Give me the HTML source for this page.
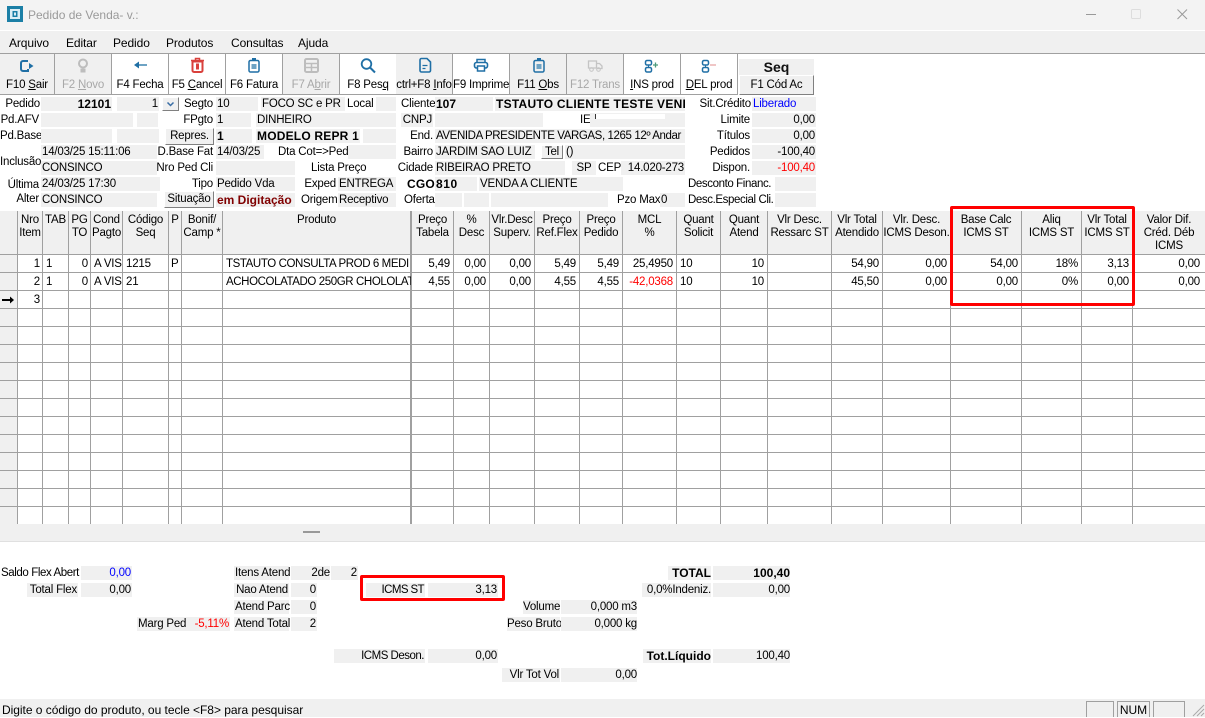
<!DOCTYPE html>
<html><head><meta charset="utf-8"><title>Pedido de Venda</title>
<style>
html,body{margin:0;padding:0;background:#fff}
body{position:relative;width:1205px;height:717px;overflow:hidden;font:11.5px/14px "Liberation Sans",sans-serif;letter-spacing:-.2px;color:#000}
div{position:absolute;white-space:nowrap;box-sizing:border-box}
.l{height:14px}
.g{height:14px;background:#f0f0f0;padding:0 1px}
.r{text-align:right}
.b{font-weight:bold;font-size:12px;letter-spacing:0}
.btn{height:17px;background:#f0f0f0;border:1px solid;border-color:#fff #808080 #808080 #fff;text-align:center;line-height:15px}
.tb{top:54px;height:40px;width:57px;text-align:center;padding-top:24px;border-right:1px solid #a0a0a0}
.w{background:#fff}.d{background:#f0f0f0}
.dis{color:#a8a8a8}
.h{top:214px;line-height:13px;text-align:center;overflow:hidden;height:40px}
.c{height:14px;line-height:14px}
.m{top:36px;font-size:12px;letter-spacing:-.1px}
svg{position:absolute;left:0;top:0}
</style></head><body>

<div style="left:0;top:0;width:1205px;height:30px;background:#f3f3f3"></div>
<div style="left:0;top:31px;width:1205px;height:22px;background:#f0f0f0"></div>
<div style="left:0;top:53px;width:1205px;height:1px;background:#a0a0a0"></div>
<div style="left:28px;top:8px;font-size:12px;letter-spacing:0;color:#9a9a9a">Pedido de Venda- v.:</div>
<div class="m" style="left:9px">Arquivo</div>
<div class="m" style="left:66px">Editar</div>
<div class="m" style="left:113px">Pedido</div>
<div class="m" style="left:166px">Produtos</div>
<div class="m" style="left:231px">Consultas</div>
<div class="m" style="left:298px">Ajuda</div>

<div class="tb d" style="left:0;width:55px">F10 <u>S</u>air</div>
<div class="tb d dis" style="left:55px">F2 <u>N</u>ovo</div>
<div class="tb w" style="left:112px">F4 Fecha</div>
<div class="tb w" style="left:169px">F5 <u>C</u>ancel</div>
<div class="tb w" style="left:226px">F6 Fatura</div>
<div class="tb d dis" style="left:283px">F7 A<u>b</u>rir</div>
<div class="tb w" style="left:340px">F8 Pes<u>q</u></div>
<div class="tb d" style="left:396px;width:57px">ctrl+F8 <u>I</u>nfo</div>
<div class="tb w" style="left:453px">F9 Imprime</div>
<div class="tb d" style="left:510px">F11 <u>O</u>bs</div>
<div class="tb d dis" style="left:567px">F12 Trans</div>
<div class="tb w" style="left:624px"><u>I</u>NS prod</div>
<div class="tb w" style="left:681px"><u>D</u>EL prod</div>
<div style="left:0;top:94px;width:738px;height:1px;background:#a0a0a0"></div>
<div class="b" style="left:739px;top:59px;width:75px;height:16px;background:#f0f0f0;text-align:center;font-size:14px;line-height:17px;color:#111">Seq</div>
<div class="btn" style="left:739px;top:75px;width:75px;height:20px;line-height:18px">F1 Cód Ac</div>

<!-- Row 1 -->
<div class="l r" style="left:0;top:97px;width:40px">Pedido</div>
<div class="g r b" style="left:41px;top:97px;width:71px">12101</div>
<div class="g r" style="left:117px;top:97px;width:42px">1</div>
<div class="btn" style="left:162px;top:97px;width:17px;height:14px"></div>
<div class="l r" style="left:170px;top:97px;width:43px">Segto</div>
<div class="g" style="left:216px;top:97px;width:42px">10</div>
<div class="g" style="left:261px;top:97px;width:84px">FOCO SC e PR</div>
<div class="l" style="left:347px;top:97px">Local</div>
<div class="g" style="left:376px;top:97px;width:20px"></div>
<div class="l" style="left:401px;top:97px">Cliente</div>
<div class="g b" style="left:435px;top:97px;width:58px">107</div>
<div class="g b" style="left:495px;top:97px;width:190px;overflow:hidden;letter-spacing:.25px">TSTAUTO CLIENTE TESTE VENI</div>
<div class="l r" style="left:690px;top:97px;width:61px">Sit.Crédito</div>
<div class="g" style="left:752px;top:97px;width:64px;color:#00f">Liberado</div>

<!-- Row 2 -->
<div class="l r" style="left:0;top:113px;width:39px">Pd.AFV</div>
<div class="g" style="left:41px;top:113px;width:92px"></div>
<div class="g" style="left:137px;top:113px;width:21px"></div>
<div class="l r" style="left:170px;top:113px;width:43px">FPgto</div>
<div class="g" style="left:216px;top:113px;width:35px">1</div>
<div class="g" style="left:256px;top:113px;width:140px">DINHEIRO</div>
<div class="g r" style="left:401px;top:113px;width:32px">CNPJ</div>
<div class="g" style="left:435px;top:113px;width:108px"></div>
<div class="l" style="left:580px;top:113px">IE</div>
<div class="g" style="left:590px;top:113px;width:95px"></div>
<div style="left:595px;top:114px;width:70px;height:5px;background:#fff;border-left:1px solid #333"></div>
<div class="l r" style="left:690px;top:113px;width:60px">Limite</div>
<div class="g r" style="left:752px;top:113px;width:64px">0,00</div>

<!-- Row 3 -->
<div class="l r" style="left:0;top:129px;width:39px">Pd.Base</div>
<div class="g" style="left:41px;top:129px;width:71px"></div>
<div class="g" style="left:117px;top:129px;width:42px"></div>
<div class="btn" style="left:165px;top:128px;width:49px">Repres.</div>
<div class="g b" style="left:216px;top:129px;width:36px">1</div>
<div class="g b" style="left:256px;top:129px;width:104px;letter-spacing:.2px">MODELO REPR 1</div>
<div class="g" style="left:363px;top:129px;width:33px"></div>
<div class="l r" style="left:400px;top:129px;width:33px">End.</div>
<div class="g" style="left:435px;top:129px;width:250px;overflow:hidden;letter-spacing:-.4px">AVENIDA PRESIDENTE VARGAS, 1265 12º Andar</div>
<div class="l r" style="left:690px;top:129px;width:60px">Títulos</div>
<div class="g r" style="left:752px;top:129px;width:64px">0,00</div>

<!-- Row 4 -->
<div class="g" style="left:41px;top:145px;width:116px">14/03/25 15:11:06</div>
<div class="l r" style="left:155px;top:145px;width:58px">D.Base Fat</div>
<div class="g" style="left:216px;top:145px;width:48px">14/03/25</div>
<div class="l" style="left:278px;top:145px">Dta Cot=&gt;Ped</div>
<div class="g" style="left:348px;top:145px;width:48px"></div>
<div class="l r" style="left:400px;top:145px;width:33px">Bairro</div>
<div class="g" style="left:435px;top:145px;width:100px">JARDIM SAO LUIZ</div>
<div class="btn" style="left:541px;top:145px;width:22px;height:14px;line-height:13px">Tel</div>
<div class="g" style="left:565px;top:145px;width:120px">()</div>
<div class="l r" style="left:690px;top:145px;width:60px">Pedidos</div>
<div class="g r" style="left:752px;top:145px;width:64px">-100,40</div>

<!-- Row 5 -->
<div class="l r" style="left:0;top:155px;width:39px">Inclusão</div>
<div class="g" style="left:41px;top:161px;width:116px">CONSINCO</div>
<div class="l r" style="left:155px;top:161px;width:58px">Nro Ped Cli</div>
<div class="g" style="left:216px;top:161px;width:79px"></div>
<div class="l" style="left:311px;top:161px">Lista Preço</div>
<div class="l r" style="left:395px;top:161px;width:38px">Cidade</div>
<div class="g" style="left:435px;top:161px;width:130px">RIBEIRAO PRETO</div>
<div class="g" style="left:572px;top:161px;width:24px;text-align:center">SP</div>
<div class="l" style="left:598px;top:161px">CEP</div>
<div class="g r" style="left:621px;top:161px;width:64px">14.020-273</div>
<div class="l r" style="left:690px;top:161px;width:60px">Dispon.</div>
<div class="g r" style="left:752px;top:161px;width:64px;color:#f00">-100,40</div>

<!-- Row 6 -->
<div class="l r" style="left:0;top:178px;width:39px">Última</div>
<div class="g" style="left:41px;top:177px;width:119px">24/03/25 17:30</div>
<div class="l r" style="left:170px;top:177px;width:43px">Tipo</div>
<div class="g" style="left:216px;top:177px;width:79px">Pedido Vda</div>
<div class="l r" style="left:300px;top:177px;width:36px">Exped</div>
<div class="g" style="left:338px;top:177px;width:58px">ENTREGA</div>
<div class="l b" style="left:407px;top:177px;letter-spacing:.2px">CGO</div>
<div class="g b" style="left:435px;top:177px;width:42px;letter-spacing:.6px">810</div>
<div class="g" style="left:479px;top:177px;width:144px">VENDA A CLIENTE</div>
<div class="l" style="left:688px;top:177px;letter-spacing:-.4px">Desconto Financ.</div>
<div class="g" style="left:775px;top:177px;width:41px"></div>

<!-- Row 7 -->
<div class="l r" style="left:0;top:192px;width:39px">Alter</div>
<div class="g" style="left:41px;top:193px;width:116px">CONSINCO</div>
<div class="btn" style="left:164px;top:191px;width:50px">Situação</div>
<div class="g b" style="left:216px;top:193px;width:79px;color:#800000;overflow:hidden">em Digitação</div>
<div class="l" style="left:301px;top:193px">Origem</div>
<div class="g" style="left:338px;top:193px;width:58px">Receptivo</div>
<div class="l" style="left:404px;top:193px">Oferta</div>
<div class="g" style="left:435px;top:193px;width:27px"></div>
<div class="g" style="left:464px;top:193px;width:25px"></div>
<div class="g" style="left:491px;top:193px;width:117px"></div>
<div class="l" style="left:617px;top:193px">Pzo Max</div>
<div class="g" style="left:660px;top:193px;width:25px">0</div>
<div class="l" style="left:688px;top:193px;letter-spacing:-.4px">Desc.Especial Cli.</div>
<div class="g" style="left:775px;top:193px;width:41px"></div>

<!-- Grid backgrounds -->
<div style="left:0;top:211px;width:1205px;height:43px;background:#f0f0f0"></div>
<div style="left:0;top:254px;width:17px;height:270px;background:#f0f0f0"></div>
<div style="left:0;top:524px;width:1205px;height:17px;background:#f0f0f0"></div>
<div style="left:0;top:541px;width:1205px;height:1px;background:#e0e0e0"></div>
<div style="left:303px;top:531px;width:17px;height:2px;background:#999"></div>
<div style="left:0;top:699px;width:1205px;height:18px;background:#f0f0f0"></div>

<svg width="1205" height="717" viewBox="0 0 1205 717" fill="none" shape-rendering="crispEdges">
<g stroke="#a0a0a0" stroke-width="1">
<path d="M17.5 211V524M42.5 211V524M68.5 211V524M90.5 211V524M122.5 211V524M168.5 211V524M181.5 211V524M222.5 211V524M453.5 211V524M489.5 211V524M534.5 211V524M579.5 211V524M622.5 211V524M676.5 211V524M720.5 211V524M767.5 211V524M831.5 211V524M882.5 211V524M950.5 211V524M1021.5 211V524M1081.5 211V524M1132.5 211V524"/>
<path d="M411 211V524" stroke-width="2"/>
<path d="M0 254.5H1205M0 272.5H1205M0 290.5H1205M0 308.5H1205M0 326.5H1205M0 344.5H1205M0 362.5H1205M0 380.5H1205M0 398.5H1205M0 416.5H1205M0 434.5H1205M0 452.5H1205M0 470.5H1205M0 488.5H1205M0 506.5H1205"/>
</g>
</svg>

<!-- Icons -->
<svg width="1205" height="717" viewBox="0 0 1205 717" fill="none">
<!-- app icon -->
<rect x="7" y="6" width="16" height="16" fill="#1b7fa6"/><rect x="10" y="9" width="10" height="10" fill="#dceef5"/><rect x="12.5" y="11" width="5" height="6" fill="#1b7fa6"/><rect x="14" y="12.5" width="2" height="3" fill="#dceef5"/>
<!-- window controls -->
<path d="M1086 14.5H1096" stroke="#999"/>
<rect x="1131.5" y="9.5" width="9" height="9" rx="1" stroke="#ddd"/>
<path d="M1177.5 9.5L1187 19M1187 9.5L1177.5 19" stroke="#999"/>
<!-- dropdown -->
<path d="M167.500 102.500l3 3 3-3" stroke="#3a6ea5" stroke-width="1.500"/>
<!-- exit -->
<path d="M28 61H23a2 2 0 0 0-2 2v6a2 2 0 0 0 2 2h5V69" stroke="#1f6fa5" stroke-width="2"/><path d="M29 63l4.500 3-4.500 3z" fill="#1f6fa5"/>
<!-- bulb -->
<circle cx="83" cy="63.500" r="4" stroke="#bdbdbd" stroke-width="2"/><path d="M80.500 68.500h5v4h-5z" fill="#bdbdbd"/>
<!-- back arrow -->
<path d="M137 65H147" stroke="#6ea3c4" stroke-width="2"/><path d="M134 65l5-3.500v7z" fill="#1f6fa5"/>
<!-- trash -->
<path d="M191 60.500H204M195.500 60V58.500h4V60" stroke="#d9403c" stroke-width="1.500"/><path d="M192.500 61.500h10V70.500a1.500 1.500 0 0 1-1.500 1.500h-7a1.500 1.500 0 0 1-1.500-1.500z" stroke="#d9403c" stroke-width="2"/><path d="M196 63.500h3v6h-3z" fill="#d9403c"/>
<!-- clipboard F6 -->
<rect x="249" y="60.500" width="10" height="11.500" rx="1.500" stroke="#1f6fa5" stroke-width="1.500"/><rect x="252" y="58" width="4" height="3" fill="#1f6fa5"/><path d="M251.500 64h5v5h-5z" fill="#6ea3c4"/>
<!-- table F7 -->
<rect x="305" y="59" width="13" height="13" rx="1.500" stroke="#bdbdbd" stroke-width="2"/><path d="M305 63.500H318M305 67.500H318M311.500 63.500V72" stroke="#bdbdbd" stroke-width="1.500"/>
<!-- search -->
<circle cx="366.500" cy="64" r="4.800" stroke="#1f6fa5" stroke-width="1.800"/><path d="M370 67.500L375 72.500" stroke="#1f6fa5" stroke-width="2"/>
<!-- doc -->
<path d="M420 60a1.500 1.500 0 0 1 1.500-1.500H427l3.500 3.500V70.500a1.500 1.500 0 0 1-1.500 1.500h-7.500a1.500 1.500 0 0 1-1.500-1.500z" stroke="#1f6fa5" stroke-width="1.600"/><path d="M422.500 65.500h5M422.500 68.500h3" stroke="#1f6fa5" stroke-width="1.200"/>
<!-- printer -->
<path d="M477 62.500V59.500h8V62.500" stroke="#1f6fa5" stroke-width="1.500"/><rect x="474.500" y="62.500" width="13" height="5.500" rx="2" stroke="#1f6fa5" stroke-width="1.600"/><rect x="477.500" y="66" width="7" height="5" fill="#fff" stroke="#1f6fa5" stroke-width="1.500"/>
<!-- clipboard F11 -->
<rect x="534" y="60.500" width="10" height="11.500" rx="1.500" stroke="#1f6fa5" stroke-width="1.500"/><rect x="537" y="58" width="4" height="3" fill="#1f6fa5"/><path d="M536.500 64h5v5h-5z" fill="#6ea3c4"/>
<!-- truck -->
<path d="M588.500 61h8v7h-8zM596.500 63.500h3l2.500 2.500v2.500h-5.500" stroke="#c4c4c4" stroke-width="1.300"/><circle cx="591.500" cy="69.500" r="1.800" stroke="#c4c4c4"/><circle cx="598.500" cy="69.500" r="1.800" stroke="#c4c4c4"/>
<!-- INS -->
<rect x="645.500" y="60.500" width="6" height="4.500" rx="1.500" stroke="#1f6fa5" stroke-width="1.500"/><rect x="645.500" y="67.500" width="6" height="4.500" rx="1.500" stroke="#1f6fa5" stroke-width="1.500"/><path d="M648.500 65V67.500" stroke="#1f6fa5"/><path d="M653 65h5M655.500 62.500v5" stroke="#4a9a7a" stroke-width="1.300"/>
<!-- DEL -->
<rect x="702.500" y="60.500" width="6" height="4.500" rx="1.500" stroke="#1f6fa5" stroke-width="1.500"/><rect x="702.500" y="67.500" width="6" height="4.500" rx="1.500" stroke="#1f6fa5" stroke-width="1.500"/><path d="M705.500 65V67.500" stroke="#1f6fa5"/><path d="M710 65h6" stroke="#e8a8a8" stroke-width="1.300"/>
<!-- row arrow -->
<path d="M2 300H11" stroke="#000" stroke-width="2"/><path d="M14 300l-4-3.500v7z" fill="#000"/>
<!-- grip -->
<path d="M1193 716L1204 705M1197 716L1204 709M1201 716L1204 713" stroke="#aaa"/>
</svg>

<!-- Headers -->
<div class="h" style="left:18px;width:24px">Nro<br>Item</div>
<div class="h" style="left:43px;width:25px">TAB</div>
<div class="h" style="left:69px;width:21px">PG<br>TO</div>
<div class="h" style="left:91px;width:31px">Cond<br>Pagto</div>
<div class="h" style="left:123px;width:45px">Código<br>Seq</div>
<div class="h" style="left:169px;width:12px">P</div>
<div class="h" style="left:182px;width:40px">Bonif/<br>Camp *</div>
<div class="h" style="left:223px;width:187px">Produto</div>
<div class="h" style="left:412px;width:41px">Preço<br>Tabela</div>
<div class="h" style="left:454px;width:35px">%<br>Desc</div>
<div class="h" style="left:490px;width:44px">Vlr.Desc<br>Superv.</div>
<div class="h" style="left:535px;width:44px">Preço<br>Ref.Flex</div>
<div class="h" style="left:580px;width:42px">Preço<br>Pedido</div>
<div class="h" style="left:623px;width:53px">MCL<br>%</div>
<div class="h" style="left:677px;width:43px">Quant<br>Solicit</div>
<div class="h" style="left:721px;width:46px">Quant<br>Atend</div>
<div class="h" style="left:768px;width:63px">Vlr Desc.<br>Ressarc ST</div>
<div class="h" style="left:832px;width:50px">Vlr Total<br>Atendido</div>
<div class="h" style="left:883px;width:67px">Vlr. Desc.<br>ICMS Deson.</div>
<div class="h" style="left:951px;width:70px">Base Calc<br>ICMS ST</div>
<div class="h" style="left:1022px;width:59px">Aliq<br>ICMS ST</div>
<div class="h" style="left:1082px;width:50px">Vlr Total<br>ICMS ST</div>
<div class="h" style="left:1133px;width:72px">Valor Dif.<br>Créd. Déb<br>ICMS</div>

<!-- Row 1 cells -->
<div class="c r" style="left:18px;top:257px;width:22px">1</div>
<div class="c" style="left:46px;top:257px">1</div>
<div class="c r" style="left:69px;top:257px;width:19px">0</div>
<div class="c" style="left:94px;top:257px;width:28px;overflow:hidden">A VIS</div>
<div class="c" style="left:126px;top:257px">1215</div>
<div class="c" style="left:171px;top:257px">P</div>
<div class="c" style="left:226px;top:257px;width:185px;overflow:hidden;letter-spacing:-.4px">TSTAUTO CONSULTA PROD 6 MEDI</div>
<div class="c r" style="left:412px;top:257px;width:38px">5,49</div>
<div class="c r" style="left:454px;top:257px;width:32px">0,00</div>
<div class="c r" style="left:490px;top:257px;width:41px">0,00</div>
<div class="c r" style="left:535px;top:257px;width:41px">5,49</div>
<div class="c r" style="left:580px;top:257px;width:39px">5,49</div>
<div class="c r" style="left:623px;top:257px;width:50px">25,4950</div>
<div class="c" style="left:680px;top:257px">10</div>
<div class="c r" style="left:721px;top:257px;width:43px">10</div>
<div class="c r" style="left:832px;top:257px;width:47px">54,90</div>
<div class="c r" style="left:883px;top:257px;width:64px">0,00</div>
<div class="c r" style="left:951px;top:257px;width:67px">54,00</div>
<div class="c r" style="left:1022px;top:257px;width:56px">18%</div>
<div class="c r" style="left:1082px;top:257px;width:47px">3,13</div>
<div class="c r" style="left:1133px;top:257px;width:67px">0,00</div>

<!-- Row 2 cells -->
<div class="c r" style="left:18px;top:275px;width:22px">2</div>
<div class="c" style="left:46px;top:275px">1</div>
<div class="c r" style="left:69px;top:275px;width:19px">0</div>
<div class="c" style="left:94px;top:275px;width:28px;overflow:hidden">A VIS</div>
<div class="c" style="left:126px;top:275px">21</div>
<div class="c" style="left:226px;top:275px;width:185px;overflow:hidden;letter-spacing:-.4px">ACHOCOLATADO 250GR CHOLOLAT</div>
<div class="c r" style="left:412px;top:275px;width:38px">4,55</div>
<div class="c r" style="left:454px;top:275px;width:32px">0,00</div>
<div class="c r" style="left:490px;top:275px;width:41px">0,00</div>
<div class="c r" style="left:535px;top:275px;width:41px">4,55</div>
<div class="c r" style="left:580px;top:275px;width:39px">4,55</div>
<div class="c r" style="left:623px;top:275px;width:50px;color:#f00">-42,0368</div>
<div class="c" style="left:680px;top:275px">10</div>
<div class="c r" style="left:721px;top:275px;width:43px">10</div>
<div class="c r" style="left:832px;top:275px;width:47px">45,50</div>
<div class="c r" style="left:883px;top:275px;width:64px">0,00</div>
<div class="c r" style="left:951px;top:275px;width:67px">0,00</div>
<div class="c r" style="left:1022px;top:275px;width:56px">0%</div>
<div class="c r" style="left:1082px;top:275px;width:47px">0,00</div>
<div class="c r" style="left:1133px;top:275px;width:67px">0,00</div>

<div class="c r" style="left:18px;top:293px;width:22px">3</div>

<!-- Red boxes -->
<div style="left:950px;top:206px;width:185px;height:100px;border:3px solid #f00;border-radius:2px"></div>
<div style="left:360px;top:575px;width:145px;height:26px;border:3px solid #f00;border-radius:2px"></div>

<!-- Bottom section -->
<div class="l" style="left:1px;top:566px;letter-spacing:-.4px">Saldo Flex Abert</div>
<div class="g r" style="left:81px;top:566px;width:51px;color:#00f">0,00</div>
<div class="g r" style="left:27px;top:583px;width:51px">Total Flex</div>
<div class="g r" style="left:81px;top:583px;width:51px">0,00</div>
<div class="g r" style="left:234px;top:566px;width:55px">Itens Atend</div>
<div class="g r" style="left:291px;top:566px;width:39px;padding:0">2de</div>
<div class="g r" style="left:331px;top:566px;width:27px">2</div>
<div class="g r" style="left:234px;top:583px;width:55px">Nao Atend</div>
<div class="g r" style="left:291px;top:583px;width:26px">0</div>
<div class="g r" style="left:234px;top:600px;width:55px">Atend Parc</div>
<div class="g r" style="left:291px;top:600px;width:26px">0</div>
<div class="g" style="left:137px;top:617px;width:93px">Marg Ped</div>
<div class="l r" style="left:190px;top:617px;width:39px;color:#f00">-5,11%</div>
<div class="g r" style="left:234px;top:617px;width:55px">Atend Total</div>
<div class="g r" style="left:291px;top:617px;width:26px">2</div>
<div class="g r" style="left:366px;top:583px;width:59px;padding-right:1px;letter-spacing:-.6px">ICMS ST</div>
<div class="g r" style="left:428px;top:583px;width:70px">3,13</div>
<div class="g r" style="left:334px;top:649px;width:91px;letter-spacing:-.5px">ICMS Deson.</div>
<div class="g r" style="left:428px;top:649px;width:70px">0,00</div>
<div class="g r" style="left:523px;top:600px;width:37px;padding:0 1px 0 0">Volume</div>
<div class="g r" style="left:561px;top:600px;width:76px;padding:0">0,000 m3</div>
<div class="g r" style="left:507px;top:617px;width:53px;padding:0 1px 0 0">Peso Bruto</div>
<div class="g r" style="left:561px;top:617px;width:76px;padding:0">0,000 kg</div>
<div class="g r" style="left:502px;top:668px;width:58px;padding:0 1px 0 0">Vlr Tot Vol</div>
<div class="g r" style="left:561px;top:668px;width:76px;padding:0">0,00</div>
<div class="g r b" style="left:668px;top:566px;width:43px;padding:0">TOTAL</div>
<div class="g r b" style="left:713px;top:566px;width:77px;padding:0">100,40</div>
<div class="g r" style="left:642px;top:583px;width:69px;padding:0">0,0%Indeniz.</div>
<div class="g r" style="left:713px;top:583px;width:77px;padding:0">0,00</div>
<div class="g r b" style="left:643px;top:649px;width:68px;padding:0">Tot.Líquido</div>
<div class="g r" style="left:713px;top:649px;width:77px;padding:0">100,40</div>

<!-- Status bar -->
<div style="left:2px;top:703px;font-size:12px;letter-spacing:-.03px">Digite o código do produto, ou tecle &lt;F8&gt; para pesquisar</div>
<div style="left:1086px;top:701px;width:28px;height:16px;border:1px solid #a0a0a0;border-bottom:0"></div>
<div style="left:1117px;top:701px;width:33px;height:16px;border:1px solid #a0a0a0;border-bottom:0;text-align:center;line-height:16px;font-size:12px;letter-spacing:0">NUM</div>
<div style="left:1153px;top:701px;width:32px;height:16px;border:1px solid #a0a0a0;border-bottom:0"></div>
</body></html>
